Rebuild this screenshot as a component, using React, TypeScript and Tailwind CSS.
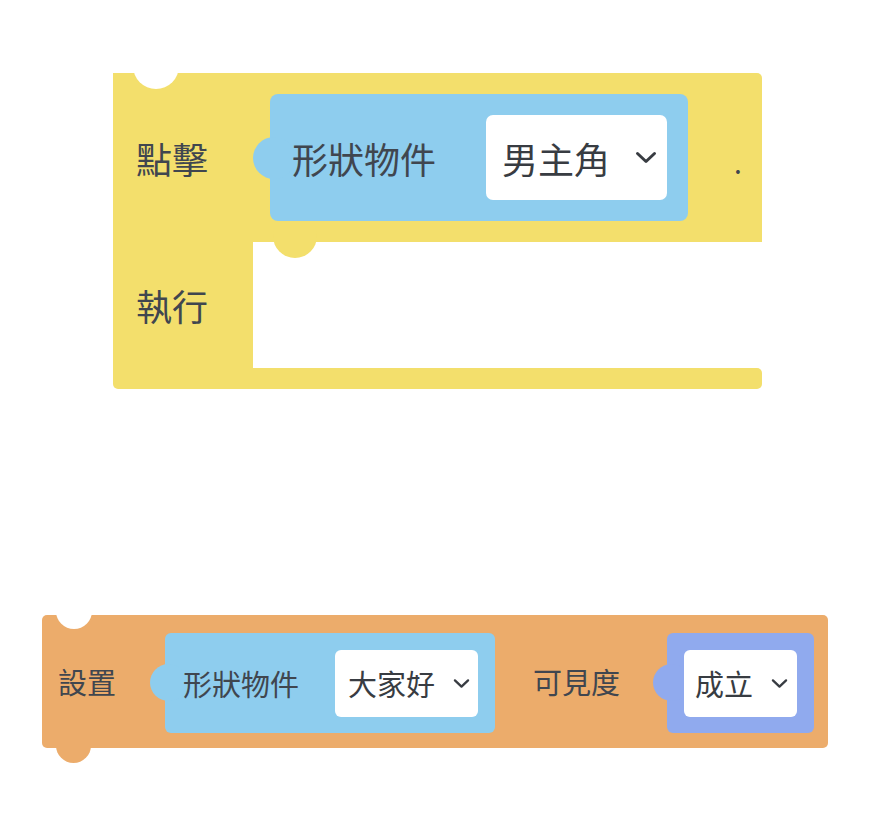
import React from "react";

const Chevron = ({ className }: { className?: string }) => (
  <svg viewBox="0 0 22 13" fill="none" stroke="currentColor" strokeWidth="3" strokeLinecap="round" strokeLinejoin="round" className={className}>
    <polyline points="2.5,2.5 11,10.5 19.5,2.5" />
  </svg>
);

export default function App() {
  return (
    <div className="relative h-[814px] w-[871px] overflow-hidden bg-white pt-[73px] font-['Noto_Sans_CJK_TC','Noto_Sans',sans-serif] text-[#40464f]">
      {/* event block */}
      <div className="relative ml-[113px] w-[649px]">
        <div className="flex h-[169px] items-center rounded-tr-[5px] bg-[#f3df6c]">
          <div className="w-[157px] shrink-0 pl-[23px] text-[36px] leading-none">點擊</div>
          <div className="relative z-10 flex h-[127px] w-[418px] shrink-0 items-center justify-between rounded-[8px] bg-[#8ecdee] pl-[22px] pr-[21px]">
            <div className="absolute left-[-17px] top-[43px] h-[42px] w-[42px] rounded-full bg-[#8ecdee]" />
            <span className="relative text-[36px] leading-none">形狀物件</span>
            <div className="flex h-[85px] w-[181px] items-center justify-between rounded-[7px] bg-white pl-[16px] pr-[10px] text-[#383c42]">
              <span className="text-[36px] leading-none">男主角</span>
              <Chevron className="h-[13px] w-[22px]" />
            </div>
          </div>
          <span className="ml-[46px] mt-[8px] text-[28px] leading-none">.</span>
        </div>
        <div className="flex h-[126px]">
          <div className="flex w-[140px] items-center bg-[#f3df6c] pl-[23px] text-[36px] leading-none">執行</div>
          <div className="relative flex-1">
            <div className="absolute left-[20px] top-[-28px] h-[44px] w-[44px] rounded-full bg-[#f3df6c]" />
          </div>
        </div>
        <div className="h-[21px] rounded-bl-[5px] rounded-r-[5px] bg-[#f3df6c]" />
        <div className="absolute left-[20px] top-[-30px] h-[46px] w-[46px] rounded-full bg-white" />
      </div>

      {/* set block */}
      <div className="relative ml-[42px] mt-[226px] w-[786px]">
        <div className="absolute left-[14px] top-[113px] h-[35px] w-[35px] rounded-full bg-[#ecac6b]" />
        <div className="relative flex h-[133px] items-center rounded-[5px] bg-[#ecac6b]">
          <div className="w-[123px] shrink-0 pl-[16px] text-[29px] leading-none">設置</div>
          <div className="relative mt-[18px] flex h-[100px] w-[330px] shrink-0 items-center justify-between self-start rounded-[6px] bg-[#8ecdee] pl-[18px] pr-[17px]">
            <div className="absolute left-[-15px] top-[31px] h-[37px] w-[37px] rounded-full bg-[#8ecdee]" />
            <span className="relative text-[29px] leading-none">形狀物件</span>
            <div className="flex h-[67px] w-[143px] items-center justify-between rounded-[6px] bg-white pl-[13px] pr-[8px] text-[#383c42]">
              <span className="text-[29px] leading-none">大家好</span>
              <Chevron className="h-[11px] w-[17px]" />
            </div>
          </div>
          <span className="ml-[38px] w-[134px] shrink-0 text-[29px] leading-none">可見度</span>
          <div className="relative mt-[18px] flex h-[100px] w-[147px] shrink-0 items-center justify-center self-start rounded-[6px] bg-[#90aaee]">
            <div className="absolute left-[-14px] top-[31px] h-[37px] w-[37px] rounded-full bg-[#90aaee]" />
            <div className="relative flex h-[67px] w-[113px] items-center justify-between rounded-[6px] bg-white pl-[11px] pr-[9px] text-[#383c42]">
              <span className="text-[29px] leading-none">成立</span>
              <Chevron className="h-[11px] w-[17px]" />
            </div>
          </div>
        </div>
        <div className="absolute left-[14px] top-[-22px] h-[36px] w-[36px] rounded-full bg-white" />
      </div>
    </div>
  );
}
